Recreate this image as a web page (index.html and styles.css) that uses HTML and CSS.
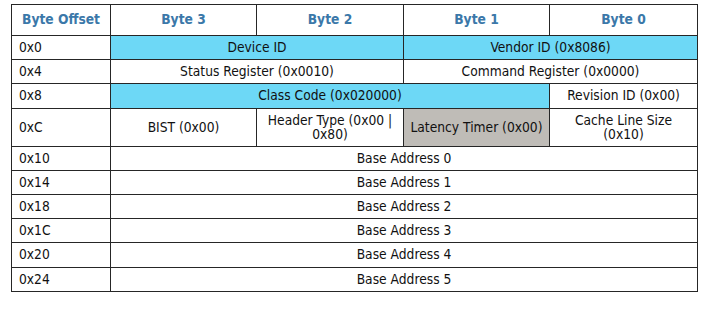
FILE: index.html
```html
<!DOCTYPE html>
<html>
<head>
<meta charset="utf-8">
<link rel="stylesheet" href="styles.css">
</head>
<body>
<table class="reg">
  <colgroup>
    <col class="c-off">
    <col class="c-b3">
    <col class="c-b2">
    <col class="c-b1">
    <col class="c-b0">
  </colgroup>
  <thead>
    <tr>
      <th>Byte Offset</th>
      <th>Byte 3</th>
      <th>Byte 2</th>
      <th>Byte 1</th>
      <th>Byte 0</th>
    </tr>
  </thead>
  <tbody>
    <tr>
      <td class="off">0x0</td>
      <td colspan="2" class="hl">Device ID</td>
      <td colspan="2" class="hl">Vendor ID (0x8086)</td>
    </tr>
    <tr>
      <td class="off">0x4</td>
      <td colspan="2">Status Register (0x0010)</td>
      <td colspan="2">Command Register (0x0000)</td>
    </tr>
    <tr>
      <td class="off">0x8</td>
      <td colspan="3" class="hl">Class Code (0x020000)</td>
      <td>Revision ID (0x00)</td>
    </tr>
    <tr class="tall">
      <td class="off">0xC</td>
      <td>BIST (0x00)</td>
      <td>Header Type (0x00 | 0x80)</td>
      <td class="grey">Latency Timer (0x00)</td>
      <td>Cache Line Size (0x10)</td>
    </tr>
    <tr>
      <td class="off">0x10</td>
      <td colspan="4">Base Address 0</td>
    </tr>
    <tr>
      <td class="off">0x14</td>
      <td colspan="4">Base Address 1</td>
    </tr>
    <tr>
      <td class="off">0x18</td>
      <td colspan="4">Base Address 2</td>
    </tr>
    <tr>
      <td class="off">0x1C</td>
      <td colspan="4">Base Address 3</td>
    </tr>
    <tr>
      <td class="off">0x20</td>
      <td colspan="4">Base Address 4</td>
    </tr>
    <tr>
      <td class="off">0x24</td>
      <td colspan="4">Base Address 5</td>
    </tr>
  </tbody>
</table>
</body>
</html>
```
FILE: styles.css
```css
html, body {
  margin: 0;
  padding: 0;
  background: #ffffff;
}

body {
  font-family: "DejaVu Sans Condensed", "DejaVu Sans", Tahoma, sans-serif;
  font-size: 13.7px;
  color: #111111;
}

.reg {
  margin: 4px 0 0 11px;
  border-collapse: collapse;
  table-layout: fixed;
  width: 686px;
}

.c-off { width: 99px; }
.c-b3 { width: 146px; }
.c-b2 { width: 147px; }
.c-b1 { width: 146px; }
.c-b0 { width: 148px; }

.reg th,
.reg td {
  border: 1px solid #262626;
  line-height: 15.2px;
  padding: 4px 6px 4px;
  text-align: center;
  vertical-align: middle;
}

.reg th {
  color: #3b78a9;
  font-weight: bold;
  line-height: 15px;
  padding-top: 7px;
  padding-bottom: 8px;
}

.reg td.off {
  text-align: left;
  padding-left: 7px;
}

.reg td.hl {
  background: #6dd8f6;
}

.reg td.grey {
  background: #bfbcb7;
}

.reg .tall td {
  line-height: 14.5px;
}
```
